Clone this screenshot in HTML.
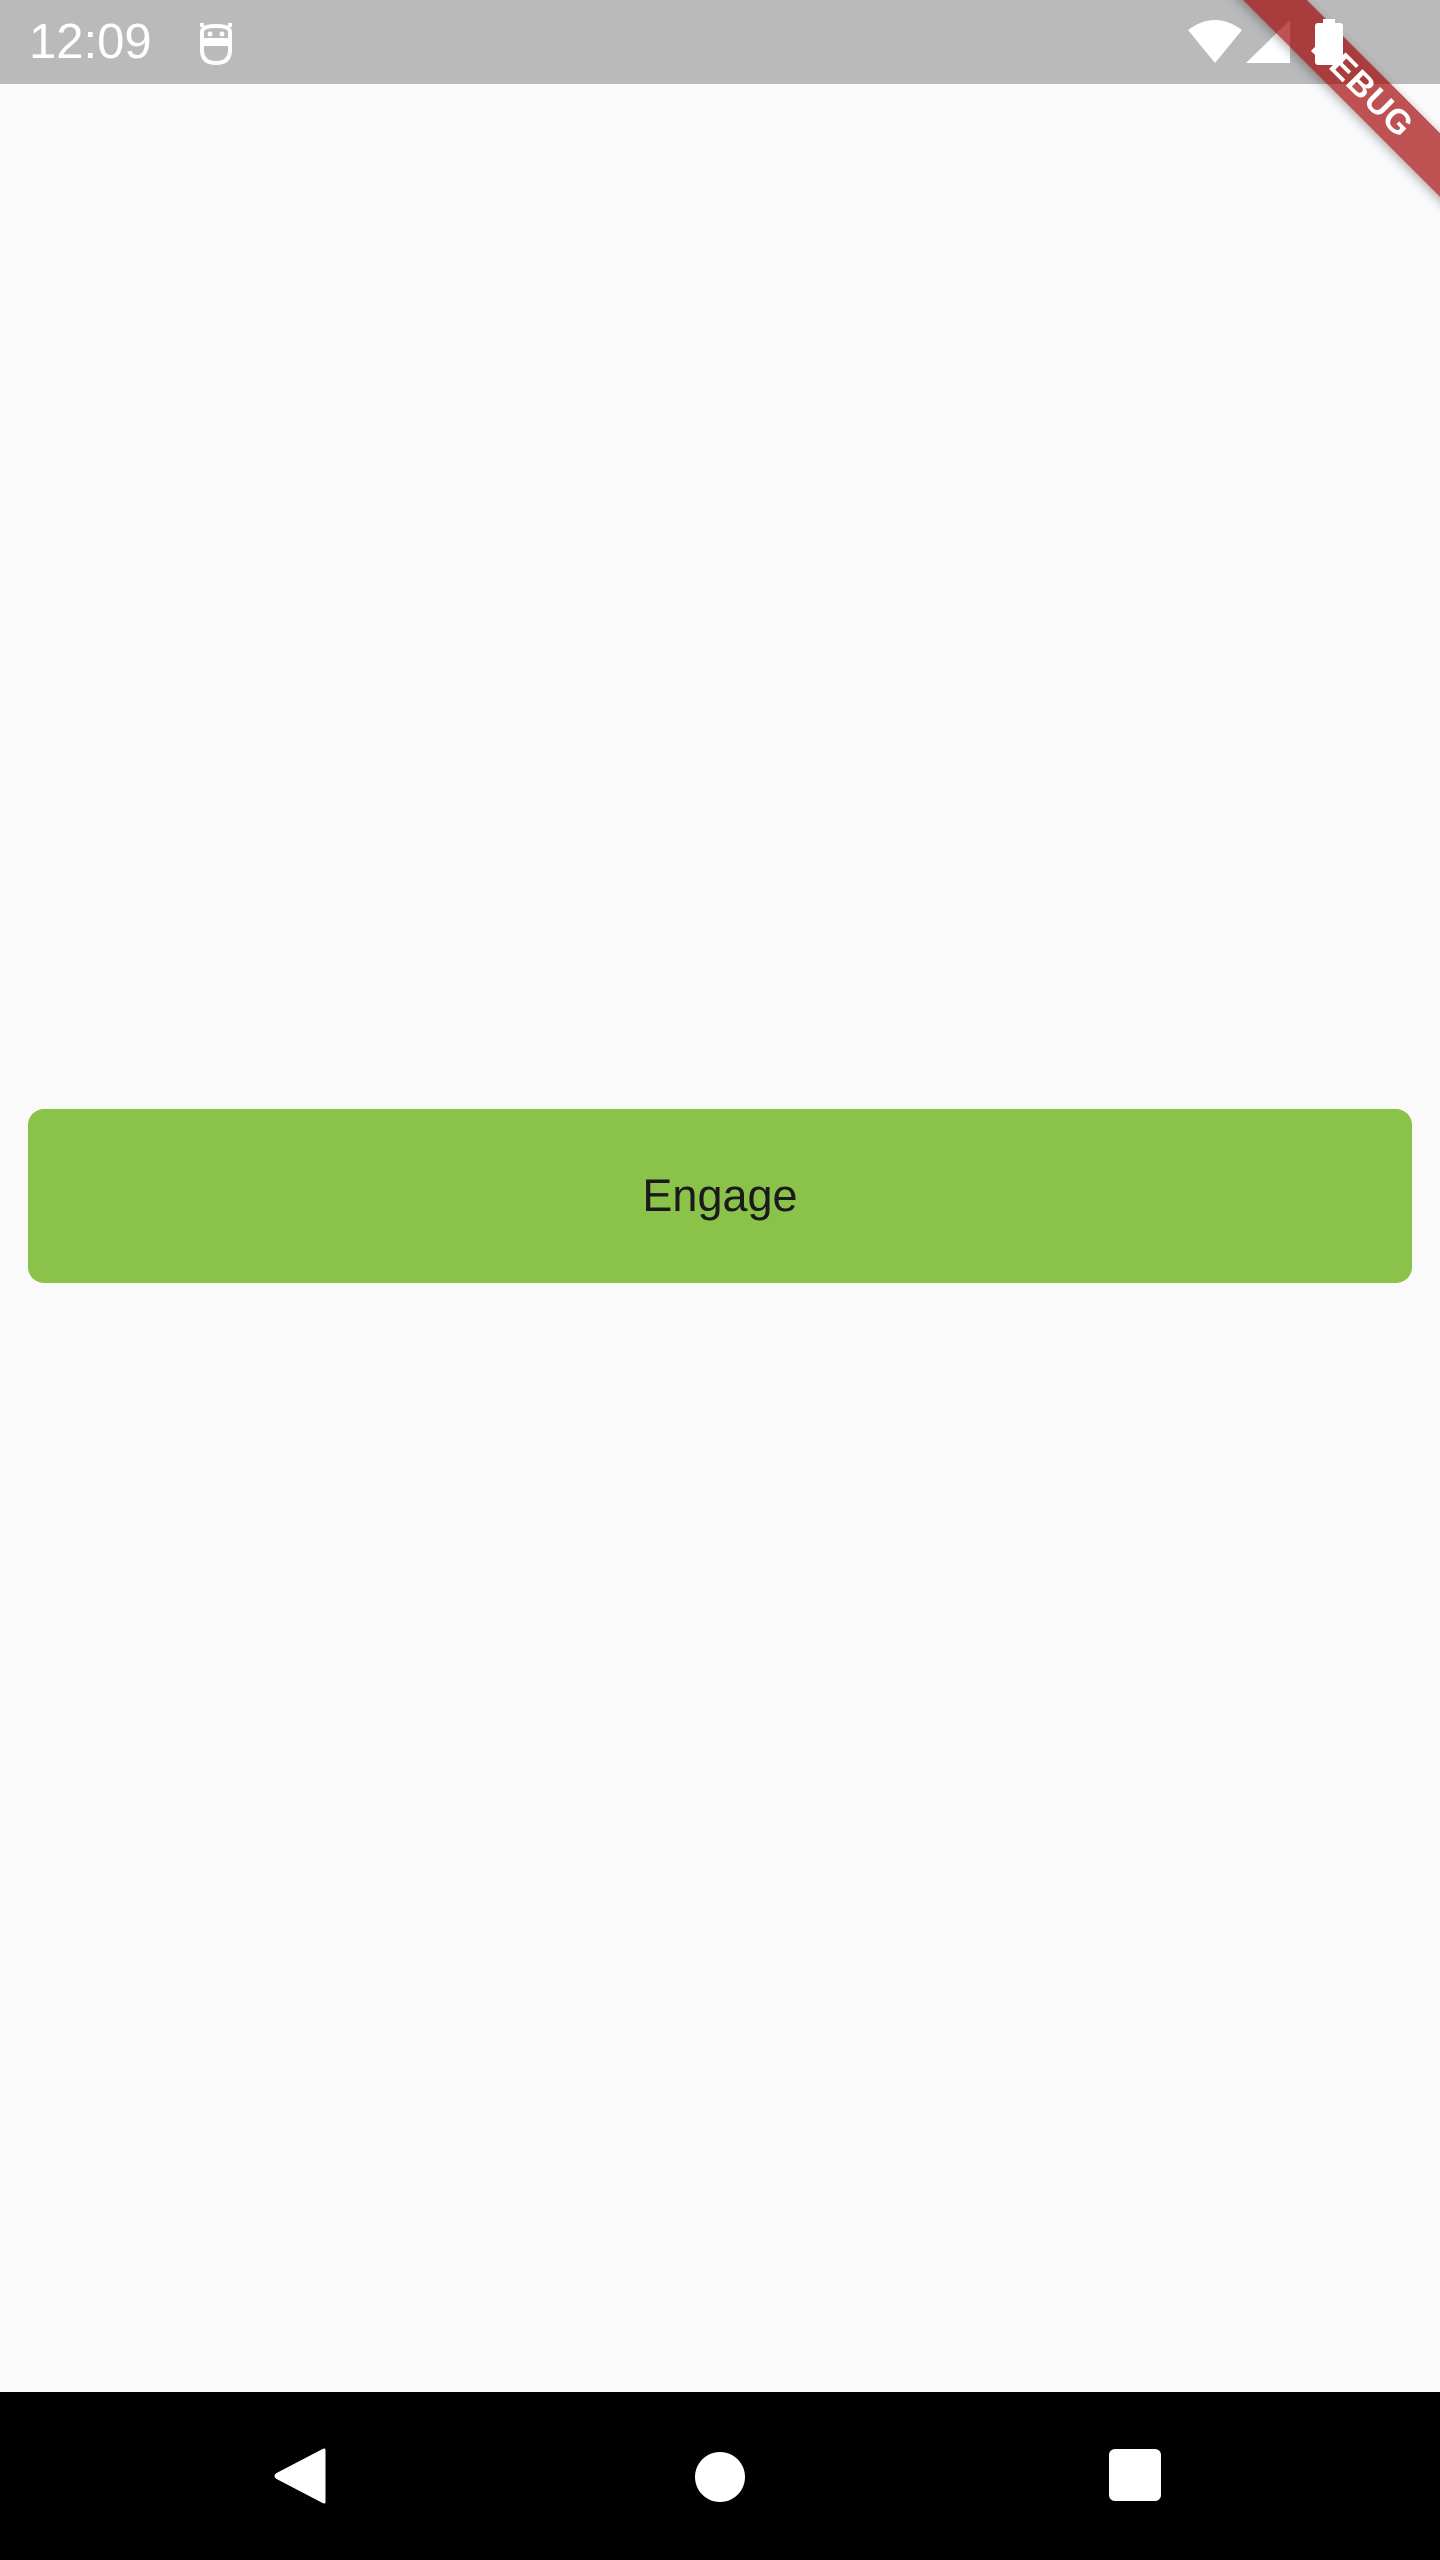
<!DOCTYPE html>
<html><head><meta charset="utf-8"><style>
html,body{margin:0;padding:0}
body{width:1440px;height:2560px;background:#fafafa;position:relative;overflow:hidden;font-family:"Liberation Sans",sans-serif}
.sb{position:absolute;left:0;top:0;width:1440px;height:84px;background:#bababa}
.time{position:absolute;left:29px;top:14px;font-size:49px;color:#fff;letter-spacing:0px}
.btn{position:absolute;left:28px;top:1109px;width:1384px;height:174px;background:#8bc34a;border-radius:16px;display:flex;align-items:center;justify-content:center;font-size:45px;color:#1a1a1a}
.nav{position:absolute;left:0;top:2392px;width:1440px;height:168px;background:#000}
.banner{position:absolute;left:1362px;top:87px;width:320px;height:45px;background:rgba(160,0,0,0.68);transform-origin:center;transform:translate(-50%,-50%) rotate(45deg);box-shadow:0 3px 10px rgba(0,0,0,0.3);color:#fff;font-weight:bold;font-size:34px;text-align:center;line-height:45px;letter-spacing:1px}
</style></head><body>
<div class="sb">
<div class="time">12:09</div>
<svg style="position:absolute;left:198px;top:20px" width="36" height="46" viewBox="0 0 36 46"><path d="M4 7 L4 3 M32 7 L32 3 M4 12 Q4 6 18 6 Q32 6 32 12 L32 20 L4 20 Z M4 24 L32 24 L32 30 Q32 43 18 43 Q4 43 4 30 Z" fill="none" stroke="#fff" stroke-width="4"/><circle cx="12" cy="14" r="2.5" fill="#fff"/><circle cx="24" cy="14" r="2.5" fill="#fff"/></svg>
<svg style="position:absolute;left:1188px;top:20px" width="54" height="44" viewBox="0 0 54 44"><path d="M0 10 Q27 -10 54 10 L27 43 Z" fill="#fff"/></svg>
<svg style="position:absolute;left:1246px;top:20px" width="44" height="44"><path d="M44 0 L44 43 L0 43 Z" fill="#fff"/></svg>
</div>
<div class="banner">DEBUG</div>
<svg style="position:absolute;left:1315px;top:19px;z-index:5" width="28" height="46"><rect x="8" y="0" width="12" height="6" fill="#fff"/><rect x="0" y="4" width="28" height="42" rx="3" fill="#fff"/></svg>
<div class="btn">Engage</div>
<div class="nav">
<svg style="position:absolute;left:274px;top:56px" width="54" height="56"><path d="M50 2 L50 54 L4 30 Q0 28 4 26 Z" fill="#fff" stroke="#fff" stroke-width="3" stroke-linejoin="round"/></svg>
<div style="position:absolute;left:695px;top:60px;width:50px;height:50px;border-radius:50%;background:#fff"></div>
<div style="position:absolute;left:1109px;top:57px;width:52px;height:52px;border-radius:6px;background:#fff"></div>
</div>
</body></html>
